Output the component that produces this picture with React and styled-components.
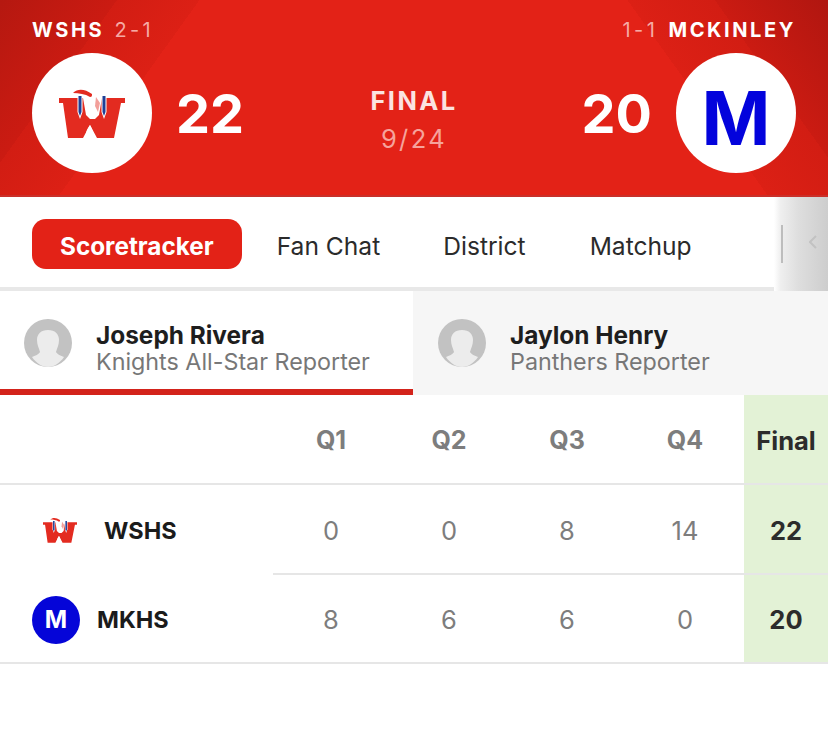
import React from "react";
import styled, { createGlobalStyle } from "styled-components";

const GlobalStyle = createGlobalStyle`
    html, body {
        margin: 0;
        background: #ffffff;
        font-family: Inter, "Noto Sans", sans-serif;
    }
`;

const Page = styled.div`
    width: 828px;
    height: 738px;
    overflow: hidden;
    background: #fff;
`;

const Header = styled.header`
    box-sizing: border-box;
    height: 197px;
    padding: 0 32px;
    border-bottom: 2px solid #c9302a;
    display: grid;
    grid-template-columns: 1fr 200px 1fr;
    color: #fff;
    background:
        linear-gradient(125.7deg, #b51810 0, #cb1b12 95px, transparent 95px),
        linear-gradient(234.3deg, #b01610 0, #cb1b12 92px, transparent 92px),
        linear-gradient(125.7deg, #d21d13 95px, #dc2015 162px, transparent 162px),
        linear-gradient(234.3deg, #d21d13 92px, #dc2015 163px, transparent 163px),
        #e32217;
`;

const Team = styled.div`
    display: flex;
    flex-direction: column;
    align-items: ${(p) => (p.$right ? "flex-end" : "flex-start")};
`;

const TeamLine = styled.div`
    margin-top: 15px;
    height: 28px;
    line-height: 30px;
    font-size: 20px;
    letter-spacing: 2.6px;
    white-space: nowrap;
`;

const TeamName = styled.span`
    font-weight: 700;
`;

const Record = styled.span`
    font-weight: 400;
    letter-spacing: 3.4px;
    margin: 0 2px;
    color: #f6aaa4;
`;

const ScoreRow = styled.div`
    margin-top: 10px;
    display: flex;
    align-items: center;
    gap: 24px;
`;

const Crest = styled.div`
    width: 120px;
    height: 120px;
    border-radius: 50%;
    background: #fff;
    display: flex;
    align-items: center;
    justify-content: center;
    flex: none;
`;

const BigM = styled.span`
    font-weight: 700;
    font-size: 74px;
    line-height: 1;
    padding-top: 10px;
    color: #0303dc;
`;

const Score = styled.div`
    font-size: 54px;
    font-weight: 700;
    line-height: 60px;
    padding-top: 2px;
`;

const Status = styled.div`
    display: flex;
    flex-direction: column;
    align-items: center;
    padding-top: 85px;
`;

const StatusTitle = styled.div`
    font-size: 25.500px;
    font-weight: 700;
    letter-spacing: 2.400px;
    line-height: 32px;
    color: #fbe3e1;
`;

const StatusDate = styled.div`
    font-size: 25.500px;
    letter-spacing: 2.400px;
    line-height: 32px;
    margin-top: 6px;
    color: #f6a39c;
`;

const TabBar = styled.nav`
    position: relative;
    height: 94px;
    box-sizing: border-box;
    border-bottom: 4px solid #e8e8e8;
    padding: 22px 0 0 32px;
    display: flex;
    align-items: flex-start;
`;

const Tab = styled.div`
    height: 50px;
    line-height: 54px;
    font-size: ${(p) => (p.$active ? "24.300px" : "24.600px")};
    white-space: nowrap;
    border-radius: 14px;
    padding: 0 ${(p) => (p.$active ? "28px" : "0")};
    margin-right: ${(p) => p.$gap}px;
    font-weight: ${(p) => (p.$active ? 700 : 400)};
    color: ${(p) => (p.$active ? "#fff" : "#2b2b2b")};
    background: ${(p) => (p.$active ? "#e32217" : "transparent")};
`;

const TabFade = styled.div`
    position: absolute;
    right: 0;
    top: 0;
    bottom: -4px;
    width: 54px;
    display: flex;
    align-items: center;
    justify-content: flex-end;
    padding-right: 11px;
    box-sizing: border-box;
    background: linear-gradient(90deg, #ffffff 0, #efefef 12%, #dedede 45%, #cdcdcd 100%);
`;

const FadeChevron = styled.svg`
    width: 8px;
    height: 14px;
    margin-bottom: 4px;
`;

const TabSep = styled.div`
    position: absolute;
    left: 781px;
    top: 28px;
    width: 2px;
    height: 38px;
    background: #bdbdbd;
`;

const Reporters = styled.div`
    display: grid;
    grid-template-columns: 413px 1fr;
    height: 104px;
`;

const Reporter = styled.div`
    display: flex;
    align-items: center;
    gap: 24px;
    padding: 6px 0 ${(p) => (p.$active ? "0" : "6px")} ${(p) => (p.$active ? "24px" : "25px")};
    box-sizing: border-box;
    background: ${(p) => (p.$active ? "#fff" : "#f6f6f6")};
    border-bottom: ${(p) => (p.$active ? "6px solid #d3231b" : "none")};
`;

const Avatar = styled.svg`
    width: 48px;
    height: 48px;
    flex: none;
`;

const ReporterText = styled.div`
    display: flex;
    flex-direction: column;
    padding-top: 10px;
`;

const ReporterName = styled.div`
    font-size: 24.400px;
    font-weight: 700;
    line-height: 28px;
    color: #1e1e1e;
`;

const ReporterRole = styled.div`
    font-size: 23.300px;
    line-height: 26px;
    color: #777;
`;

const Table = styled.div`
    display: flex;
    flex-direction: column;
`;

const Row = styled.div`
    position: relative;
    display: grid;
    grid-template-columns: 272px repeat(4, 118px) 84px;
    height: ${(p) => p.$height}px;
    border-bottom: ${(p) => (p.$line ? "2px solid #e6e6e6" : "none")};
    box-sizing: border-box;

    & > * {
        padding-top: ${(p) => p.$nudge}px;
    }
`;

const ShortLine = styled.div`
    position: absolute;
    left: 273px;
    right: 0;
    bottom: 0;
    height: 2px;
    background: #e6e6e6;
`;

const TeamCell = styled.div`
    display: flex;
    align-items: center;
    padding-left: ${(p) => p.$inset}px;
    gap: ${(p) => p.$gap}px;
`;

const TeamAbbr = styled.span`
    font-size: 23.500px;
    font-weight: 700;
    color: #1b1b1b;
`;

const QuarterHead = styled.div`
    display: flex;
    align-items: center;
    justify-content: center;
    font-size: 25px;
    font-weight: 700;
    color: #7d7d7d;
`;

const QuarterCell = styled.div`
    display: flex;
    align-items: center;
    justify-content: center;
    font-size: 25.500px;
    color: #7d7d7d;
`;

const FinalCell = styled.div`
    display: flex;
    align-items: center;
    justify-content: center;
    font-size: 25.500px;
    font-weight: 700;
    color: #2c2c2c;
    background: #e3f2d6;
`;

const MiniCrest = styled.div`
    width: 48px;
    height: 48px;
    border-radius: 50%;
    background: #0505d8;
    color: #fff;
    display: flex;
    align-items: center;
    justify-content: center;
    font-size: 24px;
    font-weight: 700;
    flex: none;
`;

const WLogo = ({ width }) => (
    <svg width={width} viewBox="0 0 66 50">
        <path
            d="M0 10H24L27 27L31 31H36L40 27L43 10H66V15H62L55 50H38L31 37L24 50H9L4 15H0Z"
            fill="#e32b20"
        />
        <path d="M27 50C26 45 28 41 31 37C33 41 35 45 36 50Z" fill="#fff" />
        <path d="M14 5C19 0 26 1 33 6C33 8 33 9 31 9C26 6 20 5 14 5Z" fill="#e32b20" />
        <path d="M37 9L41 15L39 24L36 18Z" fill="#e32b20" opacity="0.45" />
        <path d="M18.500 8H23.500V24L21 31L18.500 24Z" fill="#fff" />
        <path d="M42.500 8H47.500V24L45 31L42.500 24Z" fill="#fff" />
        <path d="M19.500 8H22.500V24L21 28L19.500 24Z" fill="#1f3f96" />
        <path d="M43.500 8H46.500V24L45 28L43.500 24Z" fill="#1f3f96" />
    </svg>
);

const AvatarIcon = () => (
    <Avatar viewBox="0 0 48 48">
        <circle cx="24" cy="24" r="24" fill="#c2c2c2" />
        <path
            d="M24 11C31 11 35 15 35 21C35 26 33 29 32 33C33 35 37 37 40 38C36 44 30 48 24 48C18 48 12 44 8 38C11 37 15 35 16 33C15 29 13 26 13 21C13 15 17 11 24 11Z"
            fill="#ececec"
        />
    </Avatar>
);

const quarters = [
    { team: "WSHS", scores: [0, 0, 8, 14], total: 22 },
    { team: "MKHS", scores: [8, 6, 6, 0], total: 20 },
];

export default function App() {
    return (
        <Page>
            <GlobalStyle />
            <Header>
                <Team>
                    <TeamLine>
                        <TeamName>WSHS</TeamName> <Record>2-1</Record>
                    </TeamLine>
                    <ScoreRow>
                        <Crest>
                            <WLogo width={66} />
                        </Crest>
                        <Score>22</Score>
                    </ScoreRow>
                </Team>
                <Status>
                    <StatusTitle>FINAL</StatusTitle>
                    <StatusDate>9/24</StatusDate>
                </Status>
                <Team $right>
                    <TeamLine>
                        <Record>1-1</Record> <TeamName>MCKINLEY</TeamName>
                    </TeamLine>
                    <ScoreRow>
                        <Score>20</Score>
                        <Crest>
                            <BigM>M</BigM>
                        </Crest>
                    </ScoreRow>
                </Team>
            </Header>
            <TabBar>
                <Tab $active $gap={35}>Scoretracker</Tab>
                <Tab $gap={63}>Fan Chat</Tab>
                <Tab $gap={64}>District</Tab>
                <Tab $gap={0}>Matchup</Tab>
                <TabFade>
                    <FadeChevron viewBox="0 0 8 14">
                        <path d="M7 1L1 7L7 13" stroke="#c2c2c2" strokeWidth="2" fill="none" />
                    </FadeChevron>
                </TabFade>
                <TabSep />
            </TabBar>
            <Reporters>
                <Reporter $active>
                    <AvatarIcon />
                    <ReporterText>
                        <ReporterName>Joseph Rivera</ReporterName>
                        <ReporterRole>Knights All-Star Reporter</ReporterRole>
                    </ReporterText>
                </Reporter>
                <Reporter>
                    <AvatarIcon />
                    <ReporterText>
                        <ReporterName>Jaylon Henry</ReporterName>
                        <ReporterRole>Panthers Reporter</ReporterRole>
                    </ReporterText>
                </Reporter>
            </Reporters>
            <Table>
                <Row $height={90} $line $nudge={2}>
                    <div />
                    <QuarterHead>Q1</QuarterHead>
                    <QuarterHead>Q2</QuarterHead>
                    <QuarterHead>Q3</QuarterHead>
                    <QuarterHead>Q4</QuarterHead>
                    <FinalCell>Final</FinalCell>
                </Row>
                {quarters.map((q, i) => (
                    <Row key={q.team} $height={i === 0 ? 90 : 89} $line={i === 1} $nudge={i === 0 ? 0 : 2}>
                        {i === 0 ? (
                            <TeamCell $inset={43} $gap={27}>
                                <WLogo width={34} />
                                <TeamAbbr>{q.team}</TeamAbbr>
                            </TeamCell>
                        ) : (
                            <TeamCell $inset={32} $gap={17}>
                                <MiniCrest>M</MiniCrest>
                                <TeamAbbr>{q.team}</TeamAbbr>
                            </TeamCell>
                        )}
                        {q.scores.map((s, j) => (
                            <QuarterCell key={j}>{s}</QuarterCell>
                        ))}
                        <FinalCell>{q.total}</FinalCell>
                        {i === 0 && <ShortLine />}
                    </Row>
                ))}
            </Table>
        </Page>
    );
}
